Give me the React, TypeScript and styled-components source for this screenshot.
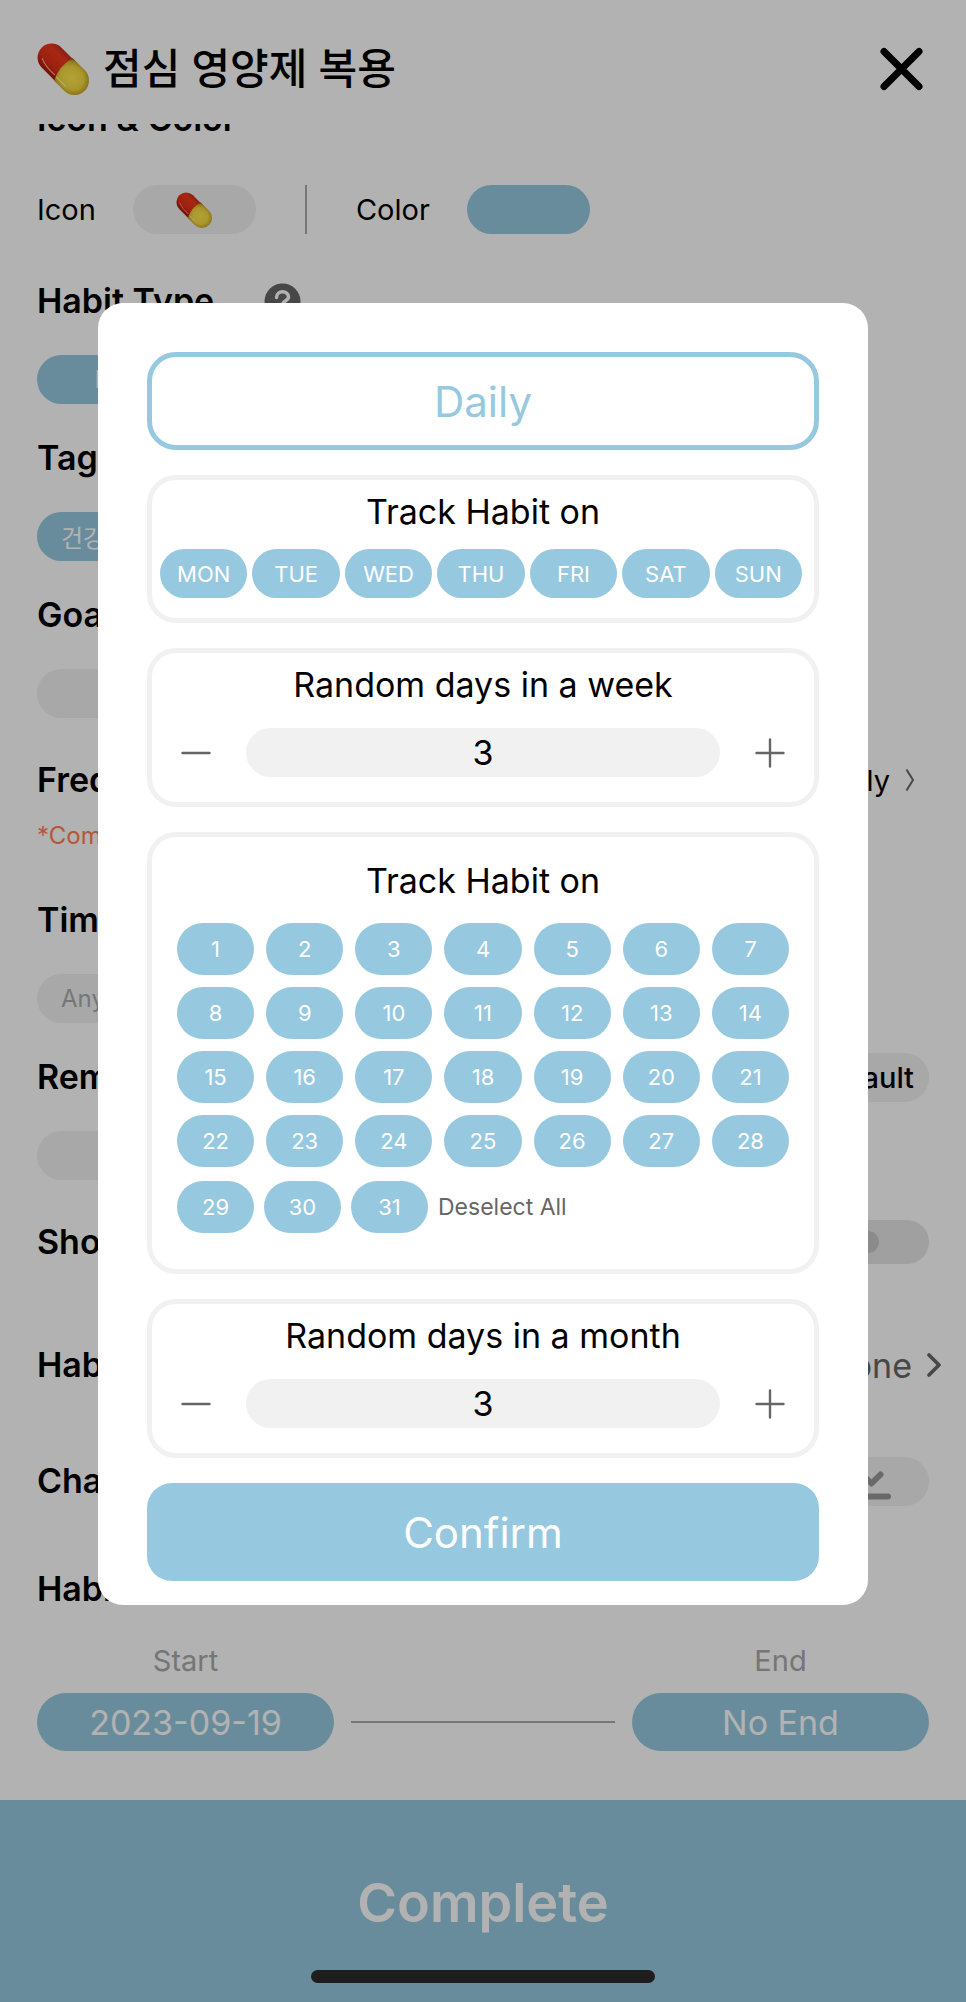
import React, { useState } from "react";
import styled, { createGlobalStyle, css } from "styled-components";

const BLUE = "#96c9e0";
const PALE = "#f1f1f1";
const GREY = "#666666";
const MUTED = "#a9a9a9";

const GlobalStyle = createGlobalStyle`
  *, *::before, *::after { box-sizing: border-box; }
  body {
    margin: 0;
    background: #ffffff;
    color: #000000;
    font-family: Inter, "Noto Sans CJK KR", sans-serif;
  }
  button, input { font: inherit; color: inherit; }
  button { border: 0; padding: 0; background: none; cursor: pointer; }
  h1, h2, p { margin: 0; }
`;

const Page = styled.div`
  position: relative;
  display: flex;
  flex-direction: column;
  min-height: 100vh;
`;

const Header = styled.header`
  display: flex;
  align-items: center;
  height: 124px;
  padding: 14px 37px 0;
  gap: 14px;
`;

const Title = styled.h1`
  flex: 1;
  font-size: 42px;
  line-height: 60px;
  font-weight: 500;
`;

const IconButton = styled.button`
  display: flex;
  align-items: center;
  justify-content: center;
`;

const Scroller = styled.main`
  flex: 1;
  overflow: hidden;
`;

const Form = styled.div`
  display: flex;
  flex-direction: column;
  margin-top: -25px;
  padding: 0 37px;
`;

const Section = styled.section<{ $gap?: number; $after?: number }>`
  display: flex;
  flex-direction: column;
  align-items: stretch;
  gap: ${(p) => p.$gap ?? 34}px;
  margin-bottom: ${(p) => p.$after ?? 34}px;
`;

const HeadingRow = styled.div`
  display: flex;
  align-items: center;
  justify-content: space-between;
  height: 40px;
`;

const Heading = styled.h2`
  font-size: 34px;
  line-height: 40px;
  font-weight: 600;
  white-space: nowrap;
`;

const HelpGroup = styled.div`
  display: flex;
  align-items: center;
  gap: 50px;
`;

const Line = styled.div`
  display: flex;
  align-items: center;
`;

const Label = styled.span`
  font-size: 29px;
  line-height: 34px;
`;

const Pill = styled.button<{ $tone?: "blue" | "pale"; $width?: number }>`
  display: flex;
  align-items: center;
  justify-content: center;
  align-self: flex-start;
  height: 49px;
  width: ${(p) => (p.$width ? `${p.$width}px` : "auto")};
  padding: 0 24px;
  border-radius: 25px;
  font-size: 24px;
  background: ${(p) => (p.$tone === "blue" ? BLUE : PALE)};
  color: ${(p) => (p.$tone === "blue" ? "#ffffff" : MUTED)};
`;

const IconPill = styled(Pill)`
  margin: 0 49px 0 37px;
`;

const ColorPill = styled(Pill)`
  margin-left: 37px;
`;

const ValuePill = styled(Pill)`
  padding: 0 15px;
  align-self: center;
  font-size: 29px;
  font-weight: 500;
  color: #000000;
`;

const Divider = styled.span`
  width: 2px;
  height: 49px;
  margin-right: 49px;
  background: ${MUTED};
`;

const Field = styled.input`
  width: 210px;
  height: 49px;
  border: 0;
  border-radius: 25px;
  background: ${PALE};
  text-align: center;
`;

const LinkButton = styled.button<{ $large?: boolean }>`
  display: flex;
  align-items: center;
  gap: 15px;
  font-size: ${(p) => (p.$large ? 34 : 29)}px;
  color: ${(p) => (p.$large ? GREY : "#000000")};
  margin-right: ${(p) => (p.$large ? -12 : 14)}px;
`;

const Note = styled.p`
  font-size: 24px;
  line-height: 30px;
  color: #ff7f50;
`;

const Toggle = styled.input`
  appearance: none;
  display: flex;
  align-items: center;
  width: 86px;
  height: 44px;
  margin: 0;
  padding: 0 14px;
  border-radius: 22px;
  background: #e5e5e5;
  &::before {
    content: "";
    width: 22px;
    height: 22px;
    border-radius: 50%;
    background: #c8c8c8;
  }
`;

const Period = styled.div`
  display: grid;
  grid-template-columns: 297px 1fr 297px;
  align-items: center;
  column-gap: 17px;
  row-gap: 15px;
`;

const PeriodLabel = styled.span<{ $col: number }>`
  grid-column: ${(p) => p.$col};
  text-align: center;
  font-size: 29px;
  line-height: 34px;
  color: ${MUTED};
`;

const DateButton = styled.button`
  height: 58px;
  border-radius: 29px;
  background: ${BLUE};
  color: #ffffff;
  font-size: 34px;
`;

const Rule = styled.span`
  height: 2px;
  background: ${MUTED};
`;

const Footer = styled.button`
  height: 202px;
  padding-top: 2px;
  background: ${BLUE};
  color: #ffffff;
  font-size: 54px;
  font-weight: 600;
`;

const HomeBar = styled.span`
  position: absolute;
  left: 50%;
  bottom: 19px;
  width: 344px;
  height: 13px;
  margin-left: -172px;
  border-radius: 7px;
  background: #1e1e1e;
`;

const Overlay = styled.div`
  position: absolute;
  inset: 0;
  padding: 303px 98px 0;
  background: rgba(0, 0, 0, 0.3);
`;

const Dialog = styled.div`
  display: flex;
  flex-direction: column;
  gap: 25px;
  padding: 49px 49px 24px;
  border-radius: 25px;
  background: #ffffff;
`;

const BigButton = styled.button<{ $filled?: boolean }>`
  height: 98px;
  border-radius: ${(p) => (p.$filled ? 25 : 29)}px;
  font-size: 42px;
  ${(p) =>
    p.$filled
      ? css`
          background: ${BLUE};
          color: #ffffff;
        `
      : css`
          border: 5px solid ${BLUE};
          color: ${BLUE};
        `}
`;

const Card = styled.fieldset<{ $pad: string }>`
  display: flex;
  flex-direction: column;
  min-width: 0;
  margin: 0;
  padding: ${(p) => p.$pad};
  border: 5px solid ${PALE};
  border-radius: 29px;
`;

const CardTitle = styled.h2`
  font-size: 34px;
  line-height: 40px;
  font-weight: 400;
  text-align: center;
`;

const WeekRow = styled.div`
  display: grid;
  grid-template-columns: repeat(7, 1fr);
  gap: 5px;
  margin: 17px 4px 0 0;
`;

const DayButton = styled.button<{ $on: boolean; $tall?: boolean }>`
  height: ${(p) => (p.$tall ? 52 : 49)}px;
  border-radius: 26px;
  font-size: 22px;
  background: ${(p) => (p.$on ? BLUE : PALE)};
  color: ${(p) => (p.$on ? "#ffffff" : GREY)};
`;

const MonthGrid = styled.div`
  display: grid;
  grid-template-columns: repeat(7, 1fr);
  gap: 12px;
  margin-top: 22px;
`;

const LastRow = styled.div`
  display: flex;
  align-items: center;
  gap: 10px;
  margin-top: 14px;
`;

const LastDay = styled(DayButton)`
  width: 77px;
`;

const TextButton = styled.button`
  font-size: 23px;
  color: ${GREY};
`;

const Stepper = styled.div`
  display: flex;
  align-items: center;
  gap: 35px;
  margin-top: 23px;
`;

const Count = styled.input`
  flex: 1;
  min-width: 0;
  height: 49px;
  padding: 0;
  border: 0;
  border-radius: 25px;
  background: ${PALE};
  font-size: 34px;
  text-align: center;
`;

function PillIcon({ size, id }: { size: number; id: string }) {
  return (
    <svg width={size} height={size} viewBox="0 0 50 50" aria-hidden="true">
      <defs>
        <linearGradient id={`${id}r`} x1="0" y1="0" x2="0" y2="1">
          <stop offset="0" stopColor="#c03018" />
          <stop offset="0.25" stopColor="#f0381c" />
          <stop offset="0.7" stopColor="#e03018" />
          <stop offset="1" stopColor="#a01808" />
        </linearGradient>
        <radialGradient id={`${id}y`} cx="0.45" cy="0.5" r="0.62">
          <stop offset="0" stopColor="#ffea4c" />
          <stop offset="0.6" stopColor="#f2d840" />
          <stop offset="0.85" stopColor="#d0ac28" />
          <stop offset="1" stopColor="#8f6e10" />
        </radialGradient>
      </defs>
      <g transform="rotate(45 25 25)">
        <path d="M27 11.500H9.500a13.500 13.500 0 0 0 0 27H27Z" fill={`url(#${id}r)`} />
        <path d="M24 11H40.500a14 14 0 0 1 0 28H27Q20 26 24 11Z" fill={`url(#${id}y)`} />
        <path d="M4 32Q12 35.500 23 34.500" stroke="#ff9a80" strokeWidth="1.200" fill="none" strokeLinecap="round" />
        <path d="M26 35H38" stroke="#fff8a0" strokeWidth="1.200" fill="none" strokeLinecap="round" />
      </g>
    </svg>
  );
}

function StepIcon({ plus }: { plus?: boolean }) {
  return (
    <svg width="30" height="30" viewBox="0 0 30 30" fill="none" stroke={GREY} strokeWidth="2.400" strokeLinecap="round">
      <path d={plus ? "M1.500 15H28.500M15 1.500V28.500" : "M1.500 15H28.500"} />
    </svg>
  );
}

function RandomDays({ title }: { title: string }) {
  const [count, setCount] = useState(3);
  return (
    <Card $pad="12px 29px 25px">
      <CardTitle>{title}</CardTitle>
      <Stepper>
        <IconButton aria-label="Decrease" onClick={() => setCount(Math.max(1, count - 1))}>
          <StepIcon />
        </IconButton>
        <Count aria-label={title} value={count} onChange={(e) => setCount(Number(e.target.value) || 1)} />
        <IconButton aria-label="Increase" onClick={() => setCount(count + 1)}>
          <StepIcon plus />
        </IconButton>
      </Stepper>
    </Card>
  );
}

const WEEK = ["MON", "TUE", "WED", "THU", "FRI", "SAT", "SUN"];
const MONTH = Array.from({ length: 28 }, (_, i) => i + 1);
const EXTRA = [29, 30, 31];

export default function App() {
  const [off, setOff] = useState<Record<string, boolean>>({});
  const flip = (key: string | number) => setOff({ ...off, [key]: !off[key] });

  return (
    <Page>
      <GlobalStyle />
      <Header>
        <PillIcon size={52} id="head" />
        <Title>점심 영양제 복용</Title>
        <IconButton aria-label="Close">
          <svg width="56" height="44" viewBox="0 0 56 44" stroke="#000" strokeWidth="7" strokeLinecap="round">
            <path d="M11 4.500L46 39.500M46 4.500L11 39.500" />
          </svg>
        </IconButton>
      </Header>

      <Scroller>
        <Form>
          <Section $gap={46} $after={47}>
            <Heading>Icon &amp; Color</Heading>
            <Line>
              <Label>Icon</Label>
              <IconPill aria-label="Choose icon" $width={123}>
                <PillIcon size={36} id="pick" />
              </IconPill>
              <Divider />
              <Label>Color</Label>
              <ColorPill aria-label="Choose color" $tone="blue" $width={123} />
            </Line>
          </Section>

          <Section>
            <HelpGroup>
              <Heading>Habit Type</Heading>
              <IconButton aria-label="Help">
                <svg width="37" height="37" viewBox="0 0 37 37" fill="none">
                  <circle cx="18.500" cy="18.500" r="18" fill={GREY} />
                  <path
                    d="M12.500 14.500C12.500 7 24.500 7 24.500 14C24.500 18 18.500 17.500 18.500 22"
                    stroke="#fff"
                    strokeWidth="3.500"
                    strokeLinecap="round"
                  />
                  <circle cx="18.500" cy="28" r="2.300" fill="#fff" />
                </svg>
              </IconButton>
            </HelpGroup>
            <Pill $tone="blue" $width={171}>
              Build
            </Pill>
          </Section>

          <Section>
            <Heading>Tag</Heading>
            <Pill $tone="blue">건강</Pill>
          </Section>

          <Section $after={42}>
            <Heading as="label" htmlFor="goal">
              Goal
            </Heading>
            <Field id="goal" />
          </Section>

          <Section $gap={21} $after={49}>
            <HeadingRow>
              <Heading>Frequency</Heading>
              <LinkButton>
                Daily
                <svg width="10" height="24" viewBox="0 0 10 24" fill="none" stroke={GREY} strokeWidth="2">
                  <path d="M1.500 1.500L8 12L1.500 22.500" />
                </svg>
              </LinkButton>
            </HeadingRow>
            <Note>*Completed</Note>
          </Section>

          <Section>
            <Heading>Time</Heading>
            <Pill>Anytime</Pill>
          </Section>

          <Section $after={42}>
            <HeadingRow>
              <Heading as="label" htmlFor="reminder">
                Reminder
              </Heading>
              <ValuePill>Default</ValuePill>
            </HeadingRow>
            <Field id="reminder" />
          </Section>

          <Section $after={83}>
            <HeadingRow>
              <Heading as="label" htmlFor="show">
                Show
              </Heading>
              <Toggle id="show" type="checkbox" />
            </HeadingRow>
          </Section>

          <Section $after={76}>
            <HeadingRow>
              <Heading>Habit</Heading>
              <LinkButton $large>
                None
                <svg width="14" height="24" viewBox="0 0 14 24" fill="none" stroke={GREY} strokeWidth="3.600" strokeLinecap="round" strokeLinejoin="round">
                  <path d="M2 2L12 12L2 22" />
                </svg>
              </LinkButton>
            </HeadingRow>
          </Section>

          <Section $after={68}>
            <HeadingRow>
              <Heading>Chart</Heading>
              <ValuePill aria-label="Chart style" $width={123}>
                <svg width="46" height="38" viewBox="0 0 46 38" fill="none" stroke="#979797" strokeWidth="6" strokeLinecap="round" strokeLinejoin="round">
                  <path d="M3 20L13 8L26.500 21.500L35.500 12.500M3 34.500H43" />
                </svg>
              </ValuePill>
            </HeadingRow>
          </Section>

          <Section $gap={35} $after={49}>
            <Heading>Habit Period</Heading>
            <Period>
              <PeriodLabel $col={1}>Start</PeriodLabel>
              <PeriodLabel $col={3}>End</PeriodLabel>
              <DateButton>2023-09-19</DateButton>
              <Rule />
              <DateButton>No End</DateButton>
            </Period>
          </Section>
        </Form>
      </Scroller>

      <Footer>Complete</Footer>

      <Overlay>
        <Dialog role="dialog" aria-modal="true" aria-label="Frequency">
          <BigButton>Daily</BigButton>

          <Card $pad="12px 8px 20px">
            <CardTitle>Track Habit on</CardTitle>
            <WeekRow>
              {WEEK.map((day) => (
                <DayButton key={day} $on={!off[day]} aria-pressed={!off[day]} onClick={() => flip(day)}>
                  {day}
                </DayButton>
              ))}
            </WeekRow>
          </Card>

          <RandomDays title="Random days in a week" />

          <Card $pad="24px 25px 36px">
            <CardTitle>Track Habit on</CardTitle>
            <MonthGrid>
              {MONTH.map((day) => (
                <DayButton key={day} $tall $on={!off[day]} aria-pressed={!off[day]} onClick={() => flip(day)}>
                  {day}
                </DayButton>
              ))}
            </MonthGrid>
            <LastRow>
              {EXTRA.map((day) => (
                <LastDay key={day} $tall $on={!off[day]} aria-pressed={!off[day]} onClick={() => flip(day)}>
                  {day}
                </LastDay>
              ))}
              <TextButton
                onClick={() => setOff({ ...off, ...Object.fromEntries([...MONTH, ...EXTRA].map((d) => [d, true])) })}
              >
                Deselect All
              </TextButton>
            </LastRow>
          </Card>

          <RandomDays title="Random days in a month" />

          <BigButton $filled>Confirm</BigButton>
        </Dialog>
      </Overlay>
      <HomeBar />
    </Page>
  );
}
